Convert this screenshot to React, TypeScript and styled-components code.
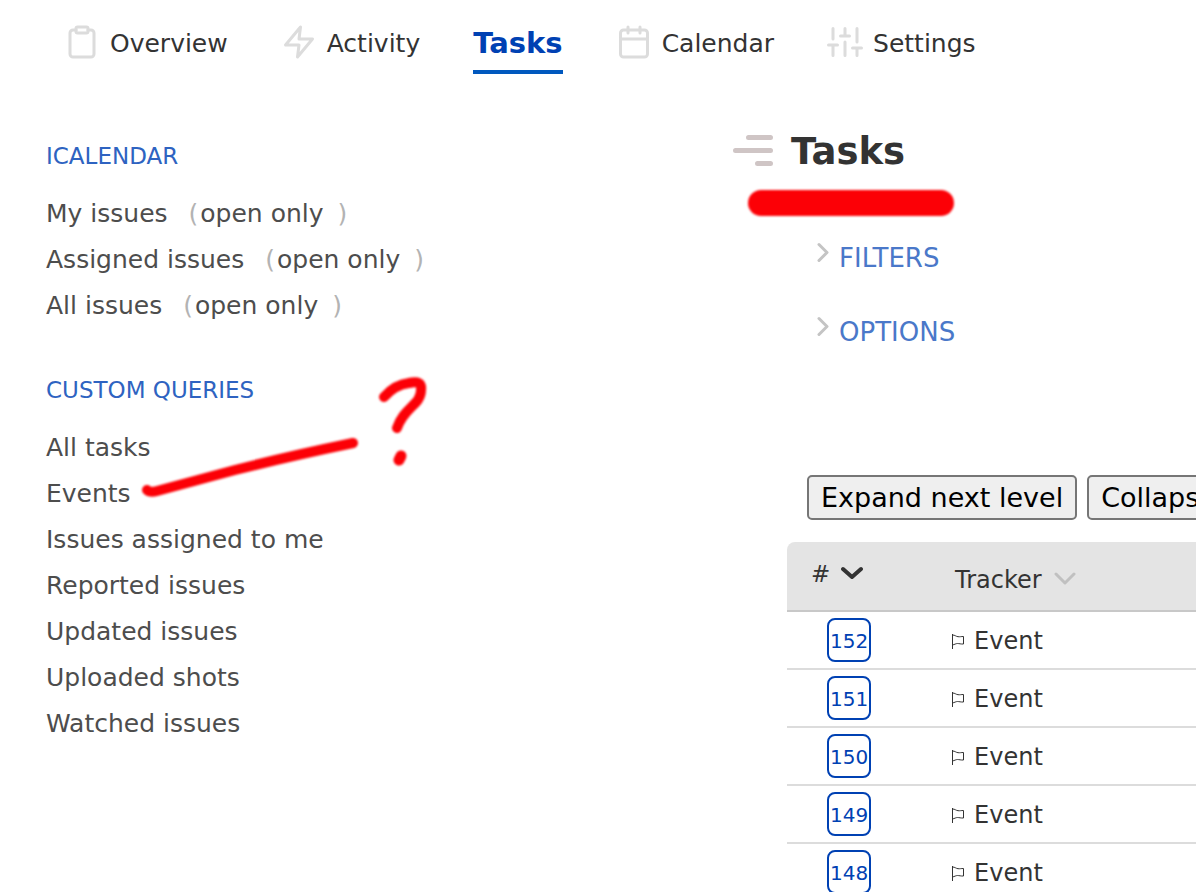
import React from 'react';
import styled, { createGlobalStyle } from 'styled-components';

const GlobalStyle = createGlobalStyle`
  *, *::before, *::after { box-sizing: border-box; }
  body {
    margin: 0;
    background: #fff;
    color: #333;
    font-family: Verdana, "DejaVu Sans", sans-serif;
  }
  a { color: inherit; text-decoration: none; }
`;

const Page = styled.div`
  height: 100vh;
  overflow: hidden;
`;

const Nav = styled.nav`
  display: flex;
  gap: 53px;
  padding: 24px 64px 0;
`;

const NavLink = styled.a<{ $active?: boolean }>`
  display: flex;
  align-items: flex-start;
  gap: 10px;
  height: 50px;
  font-size: ${(p) => (p.$active ? 29 : 25)}px;
  font-weight: ${(p) => (p.$active ? 700 : 400)};
  line-height: ${(p) => (p.$active ? 38 : 40)}px;
  color: ${(p) => (p.$active ? '#0041b3' : '#333')};
  border-bottom: ${(p) => (p.$active ? '4px solid #0058be' : '0')};
`;

const NavIcon = styled.svg`
  flex: none;
  width: 36px;
  height: 36px;
  fill: none;
  stroke: #dcdcdc;
  stroke-width: 2;
  stroke-linecap: round;
  stroke-linejoin: round;
`;

const Layout = styled.div`
  display: grid;
  grid-template-columns: minmax(0, 19fr) minmax(0, 12fr);
`;

const Sidebar = styled.aside`
  position: relative;
  padding: 68px 0 0 46px;
`;

const SideSection = styled.section`
  margin-bottom: 47px;
`;

const SideTitle = styled.h3`
  margin: 0 0 21px;
  font-size: 23px;
  font-weight: 400;
  line-height: 28px;
  color: #2e63c1;
`;

const SideList = styled.ul`
  margin: 0;
  padding: 0;
  list-style: none;
  font-size: 25px;
  line-height: 46px;
  color: #4d4d4d;
`;

const SideItem = styled.li`
  display: flex;
`;

const OpenOnly = styled.span`
  display: flex;
  margin-left: 21px;
`;

const Paren = styled.span`
  color: #b3b3b3;
`;

const OpenLink = styled.a`
  margin: 0 14px 0 2px;
`;

const SideMarks = styled.svg`
  position: absolute;
  left: 130px;
  top: 286px;
  width: 310px;
  height: 140px;
  fill: none;
  stroke: #fc0006;
  stroke-linecap: round;
  stroke-linejoin: round;
  pointer-events: none;
  filter: blur(1px);
`;

const Main = styled.main`
  position: relative;
  padding-top: 56px;
`;

const TitleRow = styled.div`
  display: flex;
  align-items: flex-start;
  gap: 18px;
`;

const TitleIcon = styled.svg`
  flex: none;
  width: 40px;
  height: 42px;
  fill: none;
  stroke: #cfc5c5;
  stroke-width: 5;
  stroke-linecap: round;
`;

const Title = styled.h1`
  margin: 0;
  font-size: 37px;
  line-height: 44px;
  font-weight: 700;
  color: #333;
`;

const RedBar = styled.div`
  position: absolute;
  left: 15px;
  top: 116px;
  width: 206px;
  height: 26px;
  border-radius: 13px;
  background: #fc0006;
  filter: blur(1px);
`;

const Toggles = styled.div`
  display: flex;
  flex-direction: column;
  gap: 42px;
  padding: 68px 0 0 84px;
`;

const Toggle = styled.button`
  display: flex;
  align-items: flex-start;
  gap: 10px;
  padding: 0;
  border: 0;
  background: none;
  font: inherit;
  font-size: 26px;
  line-height: 32px;
  color: #4a78c9;
`;

const ToggleIcon = styled.svg`
  width: 12px;
  height: 22px;
  fill: none;
  stroke: #c4c4c4;
  stroke-width: 3;
  stroke-linecap: round;
  stroke-linejoin: round;
`;

const Actions = styled.div`
  display: flex;
  gap: 10px;
  padding: 127px 0 0 74px;
  overflow: hidden;
`;

const ActionButton = styled.button`
  flex: none;
  height: 45px;
  padding: 0 12px;
  border: 2px solid #767676;
  border-radius: 5px;
  background: #efefef;
  font: inherit;
  font-size: 27px;
  line-height: 40px;
  color: #000;
`;

const TableWrap = styled.div`
  margin: 22px 0 0 54px;
  border-top-left-radius: 8px;
  overflow: hidden;
`;

const Table = styled.table`
  width: 100%;
  table-layout: fixed;
  border-collapse: separate;
  border-spacing: 0;
  font-size: 24px;
`;

const Th = styled.th<{ $id?: boolean }>`
  width: ${(p) => (p.$id ? '144px' : 'auto')};
  height: 70px;
  padding: ${(p) => (p.$id ? '0 0 4px 24px' : '8px 0 0 24px')};
  border-bottom: 2px solid #c8c8c8;
  background: #e4e4e4;
  font-weight: 400;
  text-align: left;
`;

const SortLink = styled.a<{ $id?: boolean }>`
  display: flex;
  align-items: flex-start;
  gap: ${(p) => (p.$id ? 11 : 12)}px;
  font-size: ${(p) => (p.$id ? 23 : 24)}px;
  line-height: 32px;
`;

const SortIcon = styled.svg<{ $active?: boolean }>`
  width: 22px;
  height: 30px;
  fill: none;
  stroke: ${(p) => (p.$active ? '#333' : '#c0c0c0')};
  stroke-width: ${(p) => (p.$active ? 4 : 3)};
  stroke-linecap: round;
  stroke-linejoin: round;
`;

const Td = styled.td`
  height: 58px;
  padding: 0 0 0 20px;
  border-bottom: 2px solid #dcdcdc;
  line-height: 44px;
`;

const IdLink = styled.a`
  display: block;
  width: 44px;
  height: 44px;
  margin-left: 20px;
  border: 2px solid #0041b3;
  border-radius: 8px;
  font-size: 20px;
  line-height: 42px;
  text-align: center;
  color: #0041b3;
`;

const Tracker = styled.div`
  display: flex;
  align-items: center;
  gap: 9px;
  padding-top: 2px;
`;

const Flag = styled.svg`
  width: 14px;
  height: 16px;
  fill: none;
  stroke: #333;
  stroke-width: 1;
`;

const navItems = [
  {
    label: 'Overview',
    icon: (
      <>
        <path d="M16 4h2a2 2 0 0 1 2 2v14a2 2 0 0 1-2 2H6a2 2 0 0 1-2-2V6a2 2 0 0 1 2-2h2" />
        <rect x="8" y="2" width="8" height="4" rx="1" />
      </>
    ),
  },
  { label: 'Activity', icon: <path d="M13 2 3 14h9l-1 8 10-12h-9l1-8z" /> },
  { label: 'Tasks', active: true },
  {
    label: 'Calendar',
    icon: (
      <>
        <rect x="3" y="4" width="18" height="18" rx="2" />
        <path d="M16 2v4M8 2v4M3 10h18" />
      </>
    ),
  },
  {
    label: 'Settings',
    icon: <path d="M4 21v-7M4 10V3M12 21v-9M12 8V3M20 21v-5M20 12V3M1 14h6M9 8h6M17 16h6" />,
  },
];

const calendars = ['My issues', 'Assigned issues', 'All issues'];
const queries = [
  'All tasks',
  'Events',
  'Issues assigned to me',
  'Reported issues',
  'Updated issues',
  'Uploaded shots',
  'Watched issues',
];
const ids = [152, 151, 150, 149, 148];

export default function App() {
  return (
    <Page>
      <GlobalStyle />
      <Nav>
        {navItems.map((item) => (
          <NavLink key={item.label} href="#" $active={item.active}>
            {item.icon && <NavIcon viewBox="0 0 24 24" aria-hidden="true">{item.icon}</NavIcon>}
            {item.label}
          </NavLink>
        ))}
      </Nav>
      <Layout>
        <Sidebar>
          <SideSection>
            <SideTitle>ICALENDAR</SideTitle>
            <SideList>
              {calendars.map((name) => (
                <SideItem key={name}>
                  <a href="#">{name}</a>
                  <OpenOnly>
                    <Paren>(</Paren>
                    <OpenLink href="#">open only</OpenLink>
                    <Paren>)</Paren>
                  </OpenOnly>
                </SideItem>
              ))}
            </SideList>
          </SideSection>
          <SideSection>
            <SideTitle>CUSTOM QUERIES</SideTitle>
            <SideList>
              {queries.map((name) => (
                <SideItem key={name}>
                  <a href="#">{name}</a>
                </SideItem>
              ))}
            </SideList>
          </SideSection>
          <SideMarks viewBox="130 360 310 140" aria-hidden="true">
            <path strokeWidth="10" d="M147 490Q150 493 157 491L235 470Q290 456 353 443" />
            <path strokeWidth="10" d="M384 397C391 389 400 384 409 383C418 381 422 383 421 390C421 405 404 407 397 428" />
            <path strokeWidth="11" d="M401 456L399 460" />
          </SideMarks>
        </Sidebar>
        <Main>
          <TitleRow>
            <TitleIcon viewBox="0 0 40 42" aria-hidden="true">
              <path d="M15.500 7.500H37.500M2.500 20.500H37.500M24.500 33.500H37.500" />
            </TitleIcon>
            <Title>Tasks</Title>
          </TitleRow>
          <RedBar />
          <Toggles>
            {['FILTERS', 'OPTIONS'].map((name) => (
              <Toggle key={name} type="button">
                <ToggleIcon viewBox="0 0 12 22" aria-hidden="true">
                  <path d="M2 2.500L10 10.500L2 18.500" />
                </ToggleIcon>
                {name}
              </Toggle>
            ))}
          </Toggles>
          <Actions>
            <ActionButton type="button">Expand next level</ActionButton>
            <ActionButton type="button">Collapse</ActionButton>
          </Actions>
          <TableWrap>
            <Table>
              <thead>
                <tr>
                  <Th $id scope="col">
                    <SortLink $id href="#">
                      #
                      <SortIcon $active viewBox="0 0 22 30" aria-hidden="true">
                        <path d="M2 11L11 19L20 11" />
                      </SortIcon>
                    </SortLink>
                  </Th>
                  <Th scope="col">
                    <SortLink href="#">
                      Tracker
                      <SortIcon viewBox="0 0 22 30" aria-hidden="true">
                        <path d="M2 10L11 19L20 10" />
                      </SortIcon>
                    </SortLink>
                  </Th>
                </tr>
              </thead>
              <tbody>
                {ids.map((id) => (
                  <tr key={id}>
                    <Td>
                      <IdLink href="#">{id}</IdLink>
                    </Td>
                    <Td>
                      <Tracker>
                        <Flag viewBox="0 0 14 16" aria-hidden="true">
                          <path d="M1.500 1V16M1.500 2C4 2 5 3.500 7 3.700S10 3.500 12.500 3.500V11C10 11.200 8 10.500 6.500 10.500S3.500 11.500 1.500 12" />
                        </Flag>
                        Event
                      </Tracker>
                    </Td>
                  </tr>
                ))}
              </tbody>
            </Table>
          </TableWrap>
        </Main>
      </Layout>
    </Page>
  );
}
